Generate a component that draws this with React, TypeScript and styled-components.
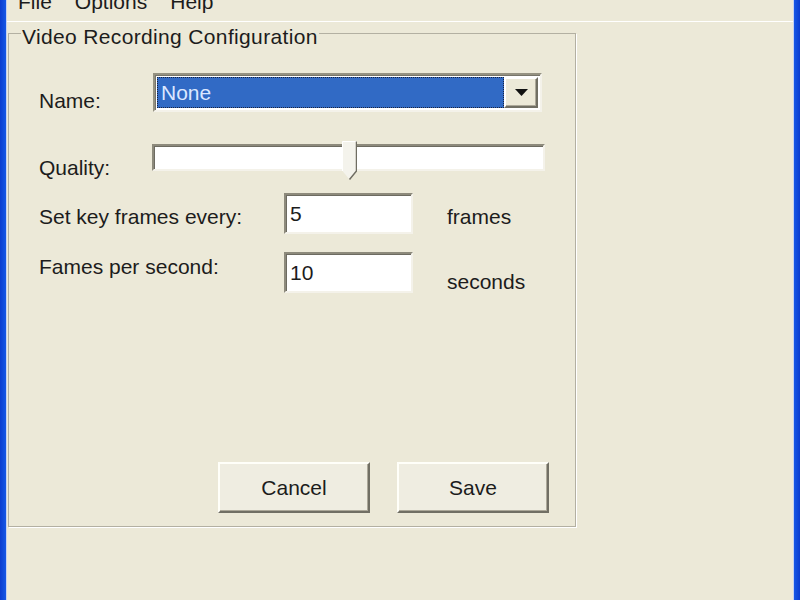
import { createGlobalStyle, styled } from 'styled-components';

const GlobalStyle = createGlobalStyle`
  html, body {
    margin: 0;
    padding: 0;
    background: #ece9d8;
  }

  body {
    font-family: 'Liberation Sans', Arial, sans-serif;
    color: #1c1c1c;
  }
`;

const quality = 50;

const App = () => {
  return (
    <Window>
      <GlobalStyle />
      <Edge $side={'left'} />
      <Client>
        <MenuBar>
          <MenuItem>File</MenuItem>
          <MenuItem>Options</MenuItem>
          <MenuItem>Help</MenuItem>
        </MenuBar>
        <Body>
          <GroupBox>
            <Legend>Video Recording Configuration</Legend>
            <Form>
              <Row>
                <Label $width={114} $top={16}>
                  Name:
                </Label>
                <Combo>
                  <Selection>None</Selection>
                  <DropButton>
                    <svg width="13" height="7" viewBox="0 0 13 7">
                      <polygon points="0,0 13,0 6.5,7" fill="#111" />
                    </svg>
                  </DropButton>
                </Combo>
              </Row>
              <Row $top={28}>
                <Label $width={113} $top={15}>
                  Quality:
                </Label>
                <Slider>
                  <Track />
                  {/* thumb position comes from the current value */}
                  <Thumb style={{ left: `calc(${quality}% - 7px)` }}>
                    <svg width="15" height="39" viewBox="0 0 15 39">
                      <polygon
                        points="0.5,0.5 14.5,0.5 14.5,30 7.5,38.5 0.5,30"
                        fill="#f4f3ec"
                      />
                      <polyline
                        points="0.5,30 0.5,0.5 14.5,0.5"
                        fill="none"
                        stroke="#ffffff"
                      />
                      <polyline
                        points="14.5,0.5 14.5,30 7.5,38.5"
                        fill="none"
                        stroke="#6f6d62"
                        strokeWidth="1.5"
                      />
                    </svg>
                  </Thumb>
                </Slider>
              </Row>
              <Row $top={13}>
                <Label $width={245} $top={12}>
                  Set key frames every:
                </Label>
                <TextBox>5</TextBox>
                <Unit $top={12}>frames</Unit>
              </Row>
              <Row $top={18}>
                <Label $width={245} $top={3}>
                  Fames per second:
                </Label>
                <TextBox>10</TextBox>
                <Unit $top={18}>seconds</Unit>
              </Row>
            </Form>
            <Footer>
              <Button>Cancel</Button>
              <Button>Save</Button>
            </Footer>
          </GroupBox>
        </Body>
      </Client>
      <Edge $side={'right'} />
    </Window>
  );
};

const Window = styled.div`
  display: flex;
  width: 800px;
  height: 600px;
  overflow: hidden;
  background: #ece9d8;
`;

const Edge = styled.div<{ $side: 'left' | 'right' }>`
  width: 6px;
  flex-shrink: 0;
  background: ${({ $side }) =>
    $side === 'left'
      ? 'linear-gradient(to right, #0a3ccf, #1658e6)'
      : 'linear-gradient(to right, #1658e6, #0a3ccf)'};
  ${({ $side }) =>
    $side === 'left'
      ? 'border-right: 1px solid #c3d1f3;'
      : 'border-left: 1px solid #c3d1f3;'}
`;

const Client = styled.div`
  flex: 1;
  display: flex;
  flex-direction: column;
`;

const MenuBar = styled.div`
  display: flex;
  align-items: flex-end;
  gap: 23px;
  height: 21px;
  padding-left: 11px;
  overflow: hidden;
  border-bottom: 1px solid #ffffff;
`;

const MenuItem = styled.div`
  font-size: 21px;
  line-height: 21px;
  padding-bottom: 9px;
`;

const Body = styled.div`
  padding-left: 1px;
`;

const GroupBox = styled.fieldset`
  display: flex;
  flex-direction: column;
  box-sizing: border-box;
  width: 568px;
  height: 505px;
  margin: 0;
  padding: 0 0 13px;
  border: 1px solid #b3b0a2;
  box-shadow: 1px 1px 0 #ffffff;
`;

const Legend = styled.legend`
  margin-left: 12px;
  padding: 8px 1px 0;
  font-size: 21px;
  line-height: 14px;
  letter-spacing: 0.35px;
`;

const Form = styled.div`
  display: flex;
  flex-direction: column;
  padding: 29px 0 0 30px;
`;

const Row = styled.div<{ $top?: number }>`
  display: flex;
  align-items: flex-start;
  margin-top: ${({ $top }) => $top ?? 0}px;
`;

const Label = styled.div<{ $width: number; $top: number }>`
  flex-shrink: 0;
  width: ${({ $width }) => $width}px;
  margin-top: ${({ $top }) => $top}px;
  font-size: 21px;
  line-height: 24px;
`;

const Unit = styled.div<{ $top: number }>`
  margin-left: 34px;
  margin-top: ${({ $top }) => $top}px;
  font-size: 21px;
  line-height: 24px;
`;

const Combo = styled.div`
  display: flex;
  box-sizing: border-box;
  width: 389px;
  height: 39px;
  padding: 2px;
  background: #ffffff;
  border: 2px solid;
  border-color: #959282 #f4f2ea #f4f2ea #959282;
  box-shadow: inset 1px 1px 0 #77756a;
`;

const Selection = styled.div`
  flex: 1;
  box-sizing: border-box;
  padding-left: 3px;
  background: #316ac5;
  border: 1px dotted #1a2440;
  color: #dbe7ff;
  font-size: 21px;
  line-height: 29px;
`;

const DropButton = styled.div`
  display: flex;
  align-items: center;
  justify-content: center;
  box-sizing: border-box;
  width: 34px;
  background: #ece9d8;
  border: 2px solid;
  border-color: #ffffff #716f64 #716f64 #ffffff;
  box-shadow: inset -1px -1px 0 #aca899;
`;

const Slider = styled.div`
  position: relative;
  width: 393px;
  height: 39px;
`;

const Track = styled.div`
  box-sizing: border-box;
  height: 27px;
  margin-top: 3px;
  background: #ffffff;
  border: 2px solid;
  border-color: #8d8a7c #f4f2ea #f4f2ea #8d8a7c;
  box-shadow: inset 1px 1px 0 #6d6b61;
`;

const Thumb = styled.div`
  position: absolute;
  top: 0;
  width: 15px;
  height: 39px;
  line-height: 0;
`;

const TextBox = styled.div`
  display: flex;
  align-items: center;
  box-sizing: border-box;
  width: 129px;
  height: 41px;
  padding-left: 4px;
  background: #ffffff;
  border: 2px solid;
  border-color: #8d8a7c #f4f2ea #f4f2ea #8d8a7c;
  box-shadow: inset 1px 1px 0 #6d6b61;
  font-size: 21px;
`;

const Footer = styled.div`
  display: flex;
  justify-content: flex-end;
  gap: 27px;
  margin-top: auto;
  padding-right: 26px;
`;

const Button = styled.button`
  box-sizing: border-box;
  width: 152px;
  height: 51px;
  padding: 0;
  background: #efede1;
  border: 2px solid;
  border-color: #fffff9 #716f64 #716f64 #fffff9;
  box-shadow: inset -1px -1px 0 #aca899;
  font-family: 'Liberation Sans', Arial, sans-serif;
  font-size: 21px;
  color: #1c1c1c;
`;

export default App;
